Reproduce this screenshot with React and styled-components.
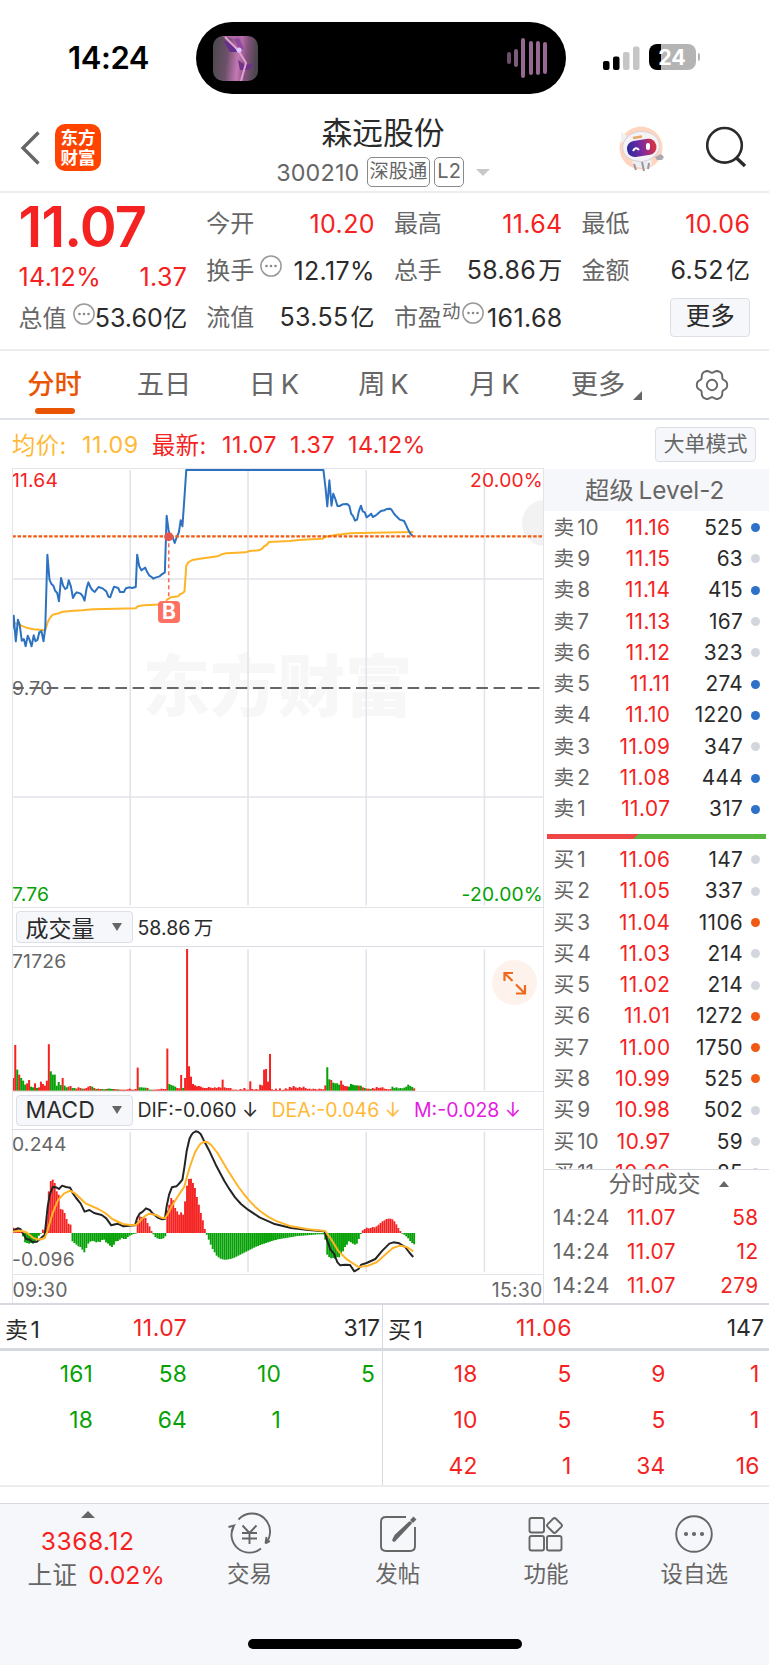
import React from 'react';
import styled, { createGlobalStyle } from 'styled-components';

const RED = '#f52222';
const GREEN = '#06a106';
const GREY = '#666666';
const DARK = '#2b2b2b';
const LINE = '#e2e4ea';

const GlobalStyle = createGlobalStyle`
  * {
    box-sizing: border-box;
  }
  body {
    margin: 0;
    background: #ffffff;
    color: ${DARK};
    font-family: Inter, "Noto Sans CJK SC", sans-serif;
  }
`;

const Page = styled.div`
  width: 769px;
  height: 1665px;
  overflow: hidden;
  display: flex;
  flex-direction: column;
`;

/* status bar */

const StatusBar = styled.div`
  height: 110px;
  padding: 22px 60px 0 68px;
  display: flex;
`;

const Clock = styled.div`
  width: 128px;
  flex: none;
  line-height: 71px;
  font-size: 31px;
  font-weight: 600;
  letter-spacing: -0.4px;
  color: #000000;
`;

const Island = styled.div`
  width: 369.5px;
  height: 72px;
  flex: none;
  padding: 0 18px 0 17px;
  border-radius: 36px;
  background: #000000;
  display: flex;
  align-items: center;
  justify-content: space-between;
`;

const Signal = styled.svg`
  flex: none;
  margin: 24px 0 0 37px;
`;

const Battery = styled.div`
  width: 47px;
  height: 26px;
  flex: none;
  margin: 22px 0 0 9px;
  border-radius: 8px;
  background: linear-gradient(90deg, #000000 25%, #b4b4b4 25%);
  color: #ffffff;
  font-size: 21.5px;
  font-weight: 700;
  line-height: 26px;
  text-align: center;
`;

const BatteryTip = styled.div`
  width: 2.5px;
  height: 8px;
  margin: 31px 0 0 2px;
  border-radius: 0 3px 3px 0;
  background: #b4b4b4;
`;

/* header */

const Header = styled.div`
  height: 83px;
  padding: 0 18px 0 20px;
  border-bottom: 2px solid #ededed;
  display: flex;
  align-items: flex-start;
`;

const BackIcon = styled.svg`
  flex: none;
  margin: 20px 14px 0 0;
`;

const Logo = styled.div`
  width: 46px;
  height: 47px;
  flex: none;
  margin-top: 14px;
  padding-top: 4px;
  border-radius: 10px;
  background: #ff4400;
  color: #ffffff;
  font-size: 17.5px;
  font-weight: 700;
  line-height: 19.5px;
  text-align: center;
`;

const TitleBlock = styled.div`
  width: 564px;
  flex: none;
  display: flex;
  flex-direction: column;
  align-items: center;
`;

const Title = styled.div`
  height: 45px;
  line-height: 45px;
  font-size: 30.8px;
`;

const SubTitle = styled.div`
  height: 34px;
  display: flex;
  align-items: center;
  color: ${GREY};
  font-size: 23.3px;
  letter-spacing: 0.2px;
`;

const Tag = styled.span`
  height: 30px;
  margin-left: ${props => props.gap}px;
  padding: 0 2px;
  border: 1.5px solid #8a8a8a;
  border-radius: 5px;
  font-size: ${props => props.size}px;
  letter-spacing: 0;
  line-height: 27px;
`;

const Triangle = styled.span`
  width: 0;
  height: 0;
  margin-left: ${props => props.gap || 0}px;
  border-left: ${props => props.size}px solid transparent;
  border-right: ${props => props.size}px solid transparent;
  border-${props => (props.up ? 'bottom' : 'top')}: ${props => props.tall}px solid ${props => props.color || GREY};
`;

const Robot = styled.svg`
  flex: none;
  margin: 16px 41px 0 -46px;
`;

const SearchIcon = styled.svg`
  flex: none;
  margin-top: 15px;
`;

/* quote summary */

const Summary = styled.div`
  height: 158px;
  padding: 0 18.5px;
  border-bottom: 2px solid #ededed;
  display: grid;
  grid-template-columns: repeat(4, 168.7px);
  column-gap: 19px;
`;

const SummaryColumn = styled.div`
  padding-top: 7px;
`;

const BigPrice = styled.div`
  height: 58px;
  line-height: 54px;
  font-size: 56px;
  font-weight: 600;
  letter-spacing: -0.8px;
  color: ${RED};
`;

const Stat = styled.div`
  height: ${props => props.height || 47}px;
  display: flex;
  align-items: center;
  justify-content: space-between;
  white-space: nowrap;
  font-size: 25px;
  letter-spacing: ${props => (props.tight ? 0 : 0.35)}px;
  line-height: 46px;
  color: ${props => props.color || DARK};
`;

const StatLabel = styled.span`
  display: flex;
  font-size: 24px;
  letter-spacing: 0;
  color: ${GREY};
`;

const Unit = styled.span`
  margin-left: ${props => (props.tight ? 0.5 : 2)}px;
  font-size: 24px;
`;

const Sup = styled.sup`
  position: relative;
  top: -7px;
  font-size: 18.5px;
  line-height: 46px;
`;

const InfoIcon = styled.svg`
  flex: none;
  margin: 7px 0 0 ${props => props.gap}px;
`;

const MoreButton = styled.div`
  width: 80px;
  height: 38.5px;
  margin: 4px 0 0 auto;
  border: 1.5px solid #dcdfe6;
  border-radius: 4px;
  background: #f6f7fa;
  font-size: 24.5px;
  line-height: 35px;
  text-align: center;
`;

/* period tabs */

const Tabs = styled.div`
  height: 69px;
  border-bottom: 2px solid #dfe1e8;
  display: flex;
`;

const Tab = styled.div`
  width: ${props => props.width}px;
  height: 67px;
  flex: none;
  display: flex;
  flex-direction: column;
  align-items: center;
  font-size: 27.3px;
  line-height: 68px;
  word-spacing: -3px;
  font-weight: ${props => (props.active ? 500 : 400)};
  color: ${props => (props.active ? '#ea5504' : GREY)};

  &::after {
    content: "";
    display: ${props => (props.active ? 'block' : 'none')};
    width: 40px;
    height: 6px;
    margin-top: -11px;
    border-radius: 3px;
    background: #ea5504;
    flex: none;
  }
`;

const Corner = styled.svg`
  flex: none;
  margin: 40px 53px 0 -12px;
`;

const GearIcon = styled.svg`
  flex: none;
  margin-top: 17px;
`;

/* average price line */

const PriceLine = styled.div`
  height: 48px;
  padding: 0 13px 0 12px;
  display: flex;
  align-items: center;
  font-size: 23.3px;
  letter-spacing: 0.5px;
  color: ${RED};
`;

const PriceItem = styled.span`
  width: ${props => props.width}px;
  color: ${props => props.color};
`;

const ModeButton = styled.div`
  width: 101px;
  height: 35px;
  margin-left: auto;
  border: 1.5px solid #dcdfe6;
  border-radius: 4px;
  background: #f6f7fa;
  color: ${GREY};
  font-size: 21px;
  letter-spacing: 0;
  line-height: 32px;
  text-align: center;
`;

/* charts */

const Main = styled.div`
  height: 837px;
  display: flex;
  border-bottom: 2px solid #d6d9df;
`;

const Charts = styled.div`
  width: 532px;
  margin-left: 11.5px;
  border: 1px solid ${LINE};
  border-width: 1.5px 1px 0;
`;

const ChartArea = styled.div`
  position: relative;
  height: ${props => props.height}px;
  overflow: hidden;
  border-bottom: 1.5px solid ${LINE};

  > svg {
    display: block;
  }
`;

const ChartLabel = styled.span`
  position: absolute;
  ${props => props.side || 'left'}: -0.5px;
  top: ${props => props.top}px;
  line-height: 20px;
  font-size: 19.3px;
  letter-spacing: 0.2px;
  color: ${props => props.color || GREY};
`;

const Watermark = styled.div`
  position: absolute;
  left: 130px;
  top: 178px;
  font-size: 67.5px;
  font-weight: 900;
  line-height: 80px;
  color: #f7f7f8;
`;

const SideKnob = styled.div`
  position: absolute;
  right: -24px;
  top: 31px;
  width: 45px;
  height: 46px;
  border-radius: 50%;
  background: #f2f2f2;
`;

const BuyMark = styled.div`
  position: absolute;
  left: 145.5px;
  top: 132px;
  width: 22px;
  height: 22px;
  border-radius: 4px;
  background: #fc7164;
  color: #ffffff;
  font-size: 21px;
  font-weight: 700;
  line-height: 22px;
  text-align: center;
`;

const ExpandButton = styled.div`
  position: absolute;
  right: 6px;
  top: 13px;
  width: 45px;
  height: 45px;
  border-radius: 50%;
  background: #fef2ec;
`;

const IndicatorBar = styled.div`
  height: 38.5px;
  padding-left: 3px;
  border-bottom: 1.5px solid #d9dce4;
  display: flex;
  align-items: center;
  white-space: nowrap;
  font-size: 19.5px;
  word-spacing: ${props => props.wordGap || 0}px;
`;

const IndicatorSelect = styled.div`
  width: 117px;
  height: 31.5px;
  margin-right: 5px;
  padding: 0 10px 0 9px;
  border: 1.5px solid #dcdfe6;
  border-radius: 4px;
  background: #f6f7fa;
  display: flex;
  align-items: center;
  justify-content: space-between;
  font-size: 23px;
`;

const Indicator = styled.span`
  width: ${props => props.width}px;
  color: ${props => props.color};
`;

const TimeAxis = styled.div`
  height: 29px;
  display: flex;
  justify-content: space-between;
  font-size: 19.5px;
  letter-spacing: 0.2px;
  line-height: 31px;
  color: ${GREY};
`;

/* level 2 panel */

const LevelPanel = styled.div`
  flex: 1;
  display: flex;
  flex-direction: column;
`;

const LevelTitle = styled.div`
  height: 42px;
  flex: none;
  margin-top: 1px;
  background: #f6f7fa;
  color: ${GREY};
  font-size: 24.3px;
  line-height: 43px;
  word-spacing: -2px;
  padding-right: 3px;
  text-align: center;
`;

const Book = styled.div`
  height: 658px;
  flex: none;
  padding-top: 1px;
  overflow: hidden;
`;

const BookRow = styled.div`
  height: 31.3px;
  padding: 0 9px 0 10px;
  display: flex;
  align-items: center;
  font-size: 20.8px;
  line-height: 24px;
`;

const BookSide = styled.span`
  width: 55px;
  color: ${GREY};
  word-spacing: -3px;
`;

const BookPrice = styled.span`
  width: 62px;
  text-align: right;
  letter-spacing: 0.5px;
  color: ${RED};
`;

const BookVolume = styled.span`
  flex: 1;
  text-align: right;
  letter-spacing: 0.3px;
`;

const Dot = styled.span`
  width: 9px;
  height: 9px;
  margin-left: 8px;
  border-radius: 50%;
  background: ${props => props.color};
`;

const RatioBar = styled.div`
  height: 5px;
  margin: 9px 3px 5.3px;
  background: linear-gradient(135deg, #ee4646 40.7%, #58b741 40.7%);
`;

const TradesTitle = styled.div`
  height: 31px;
  flex: none;
  border-top: 1.5px solid #d6d9df;
  padding: 0 0 2px 65px;
  display: flex;
  align-items: center;
  color: ${GREY};
  font-size: 23px;
  line-height: 28px;
`;

const TradeRow = styled.div`
  height: 34.3px;
  flex: none;
  padding: 0 10.5px 0 9.5px;
  display: flex;
  align-items: center;
  font-size: 20.8px;
  letter-spacing: 0.4px;
  color: ${RED};
`;

const TradeTime = styled.span`
  width: 74px;
  letter-spacing: 0.7px;
  color: ${GREY};
`;

const TradeVolume = styled.span`
  margin-left: auto;
`;

/* order queues */

const Queues = styled.div`
  height: 182px;
  display: grid;
  grid-template-columns: 382px 387px;
  border-bottom: 2px solid #ededed;
`;

const Queue = styled.div`
  height: 180px;
  border-left: ${props => (props.divided ? '1.5px solid #d6d9df' : 'none')};
`;

const QueueHead = styled.div`
  height: 46px;
  padding: 3px ${props => props.right}px 0 5px;
  border-bottom: 3px solid #d6dae0;
  display: flex;
  align-items: center;
  font-size: 23px;
`;

const QueueName = styled.span`
  width: 128px;
  word-spacing: -4px;
`;

const QueuePrice = styled.span`
  flex: 1;
  letter-spacing: 0.5px;
  color: ${RED};
`;

const QueueGrid = styled.div`
  width: 375px;
  margin-left: ${props => props.left}px;
  display: grid;
  grid-template-columns: repeat(4, 94px);
  color: ${props => props.color};
  font-size: 22.8px;
  letter-spacing: 0.2px;
  line-height: 45.8px;
  text-align: right;
`;

/* bottom bar */

const BottomBar = styled.div`
  height: 162px;
  margin-top: 16px;
  border-top: 1.5px solid #d6d9df;
  background: #f6f7fa;
  display: flex;
  flex-direction: column;
  align-items: center;
  justify-content: space-between;
  padding-bottom: 16px;
`;

const Nav = styled.div`
  width: 769px;
  display: flex;
`;

const IndexItem = styled.div`
  width: 175.3px;
  padding-top: 7px;
  display: flex;
  flex-direction: column;
  align-items: center;
  color: ${RED};
`;

const IndexValue = styled.div`
  margin-top: 6px;
  line-height: 34px;
  font-size: 24.6px;
  letter-spacing: 0.5px;
`;

const IndexChange = styled.div`
  padding-left: 17px;
  line-height: 35px;
  font-size: 24.8px;

  span {
    margin-right: 11px;
    color: ${GREY};
  }
`;

const NavItem = styled.div`
  width: 148.3px;
  padding-top: 8px;
  display: flex;
  flex-direction: column;
  align-items: center;
  font-size: 22.5px;
  line-height: 36px;
  color: ${GREY};
`;

const HomeIndicator = styled.div`
  width: 274px;
  height: 10px;
  border-radius: 5px;
  background: #000000;
`;

const sells = [
  ['10', '11.16', 525, 1], ['9', '11.15', 63, 0], ['8', '11.14', 415, 1], ['7', '11.13', 167, 0],
  ['6', '11.12', 323, 0], ['5', '11.11', 274, 1], ['4', '11.10', 1220, 1], ['3', '11.09', 347, 0],
  ['2', '11.08', 444, 1], ['1', '11.07', 317, 1],
];

const buys = [
  ['1', '11.06', 147, 0], ['2', '11.05', 337, 0], ['3', '11.04', 1106, 1], ['4', '11.03', 214, 0],
  ['5', '11.02', 214, 0], ['6', '11.01', 1272, 1], ['7', '11.00', 1750, 1], ['8', '10.99', 525, 1],
  ['9', '10.98', 502, 0], ['10', '10.97', 59, 0], ['11', '10.96', 85, 0],
];

const pricePoints = '35,510 39,468 45,545 51,480 56,495 62,543 68,538 73,560 79,528 84,540 90,560 96,527 101,545 107,540 112,518 118,514 124,545 129,505 135,285 141,360 146,372 152,378 157,393 163,400 168,425 174,355 180,378 186,388 191,385 196,362 202,380 208,415 214,403 219,398 230,402 236,410 241,423 247,385 252,368 258,383 264,392 270,397 275,390 281,382 292,386 298,391 303,395 309,411 314,413 320,395 325,381 337,385 342,397 353,397 359,386 370,383 376,385 387,382 391,285 397,320 403,332 408,328 414,324 420,338 426,348 432,352 437,357 443,354 455,350 460,345 470,338 475,168 481,215 487,235 492,232 498,250 504,232 510,218 515,182 520,200 526,110 531,31 922,31 928,85 933,140 939,62 945,138 950,102 956,118 962,139 968,139 977,134 990,133 996,139 1001,162 1007,170 1012,183 1018,180 1023,155 1029,138 1034,155 1040,158 1045,173 1052,168 1058,162 1063,172 1070,168 1076,163 1086,154 1096,152 1102,148 1113,147 1118,153 1124,163 1130,170 1140,180 1152,184 1158,197 1163,209 1170,222 1177,229';

const averagePoints = '37,488 56,496 75,504 95,509 129,512 135,490 141,477 150,465 168,461 175,457 200,454 235,452 265,449 300,448 387,446 393,440 410,437 470,434 476,420 487,413 508,410 514,403 520,401 526,395 531,318 537,308 548,301 570,297 620,290 632,284 645,281 700,278 712,274 738,272 746,268 754,259 760,256 767,247 825,244 860,240 920,237 928,231 960,225 1000,221 1060,219 1178,217';

const difPoints = '35,422 43,420 50,416 58,418 65,430 75,448 85,450 92,457 105,456 115,448 122,440 127,438 131,400 136,350 142,315 150,292 160,293 168,298 177,288 188,292 200,294 207,310 217,325 230,342 241,366 255,361 268,370 290,376 303,386 317,407 335,402 352,410 385,407 391,385 398,372 407,366 416,356 427,361 435,371 450,384 462,389 470,388 475,350 482,315 490,293 503,290 512,280 520,270 526,230 532,185 540,148 545,137 550,130 558,125 565,127 572,133 580,150 595,180 615,225 640,275 655,300 670,323 687,343 707,360 740,383 780,402 830,415 880,421 925,425 932,450 942,480 952,492 962,518 970,527 985,525 998,526 1010,545 1022,538 1030,525 1045,520 1070,508 1090,483 1110,462 1122,458 1138,461 1155,472 1168,490 1178,502';

const deaPoints = '35,426 58,423 75,428 95,445 110,450 127,446 135,425 150,370 165,332 182,312 200,303 215,312 245,342 280,358 300,370 320,388 350,403 375,407 388,405 400,393 412,380 425,372 445,376 460,384 470,386 480,370 492,345 510,315 525,292 540,235 555,190 563,175 572,162 583,156 592,158 602,166 620,190 650,243 680,292 695,313 710,332 727,351 745,367 767,383 790,395 830,410 880,419 927,424 945,450 965,485 990,510 1022,532 1050,528 1075,517 1100,493 1120,475 1140,468 1160,472 1178,485';

// one bar per minute, negative values are drawn green
const volumes = [
  38, 137, -63, 48, -38, -30, -18, 22, 32, -12, -10, 22, -8, 10, 27, 20, 15, 30, 139, -58,
  -48, -48, -15, -26, -17, 38, -15, -10, 12, 14, -8, -8, 6, 10, 8, -6, 6, 8, 12, 14,
  -12, 8, -5, 6, 5, -5, -4, 5, -6, -6, -5, 5, 4, -4, 3, 3, 3, 3, 4, 6,
  3, 3, 5, 69, -10, -10, -9, -9, 8, -3, -3, 3, 3, 4, 4, 6, 5, 5, 126, -20,
  -17, -15, -12, 8, 7, 47, -8, 38, 424, 73, 42, 20, 16, 13, 14, 12, 9, 8, 8, 11,
  9, 8, 10, 8, 11, 9, 33, 10, 8, 8, 8, 3, 3, 3, 2, 5, 3, 8, 3, 3,
  28, 5, 3, 5, 3, 18, 16, 63, 65, 27, 110, 4, 2, 6, 2, 7, 2, 3, 7, 4,
  11, 9, 14, 10, 8, 11, 8, 12, 8, 5, 6, 4, 6, 5, 3, 6, 5, 4, 16, -70,
  -34, 32, -24, -22, -22, -18, 30, 18, 14, 13, -12, -20, -18, -16, -16, 15, -15, 10, -8, 6,
  6, -5, 8, 6, 11, 8, 9, 10, 6, 5, 4, 5, -12, -8, -10, -7, -8, -7, -9, -12,
  -18, -14, -11, 7,
];

const macd = [
  16, 14, 12, 10, 3, -10, -28, -30, -32, -30, -32, -24, -20, -8, -2, 10, 5, 50, 125, 156,
  160, 150, 125, 115, 72, 70, 60, 42, 28, 25, -25, -30, -35, -40, -42, -50, -58, -45, -32, -26,
  -24, -25, -28, -26, -27, -21, -20, -28, -32, -38, -42, -35, -25, -24, -20, -15, -18, -18, -12, -8,
  -5, -3, -2, 35, 50, 48, 48, 45, 30, 20, 6, -4, -12, -16, -18, -18, -16, -10, 68, 85,
  105, 98, 75, 65, 55, 62, 55, 95, 142, 162, 163, 150, 135, 108, 85, 60, 38, 12, -5, -20,
  -35, -48, -58, -68, -73, -77, -79, -80, -80, -79, -78, -76, -74, -71, -68, -65, -62, -59, -56, -53,
  -50, -47, -44, -41, -39, -36, -34, -32, -30, -28, -26, -24, -22, -21, -19, -18, -17, -16, -15, -14,
  -13, -12, -11, -10, -9, -9, -8, -8, -7, -7, -6, -6, -5, -5, -4, -4, -4, -4, -20, -65,
  -72, -76, -75, -78, -72, -73, -62, -55, -42, -35, -25, -28, -32, -35, -32, -18, -3, 8, 12, 16,
  14, 15, 18, 17, 20, 25, 30, 35, 38, 42, 43, 43, 41, 35, 26, 15, 6, -2, -5, -10,
  -16, -24, -30, -34,
];

const Bars = ({ values, base, width, signed }) => values.map((value, i) => (
  <rect
    key={i}
    x={35 + i * 5.63}
    y={signed && value < 0 ? base : base - Math.abs(value)}
    width={width}
    height={Math.abs(value)}
    fill={value > 0 ? RED : GREEN}
  />
));

const Grid = ({ top, bottom }) => [371, 707, 1044, 1381].map(x => (
  <line key={x} x1={x} x2={x} y1={top} y2={bottom} stroke={LINE} strokeWidth="4.5" />
));

const Curve = ({ points, color }) => (
  <polyline points={points} fill="none" stroke={color} strokeWidth="2" strokeLinejoin="round" vectorEffect="non-scaling-stroke" />
);

// six-lobed cog outline
const gearPoints = Array.from({ length: 72 }, (_, i) => {
  const angle = (i * Math.PI) / 36;
  const r = 14 + 1.5 * Math.cos(6 * angle) - 0.3 * Math.cos(12 * angle);
  return `${(17 + r * Math.cos(angle)).toFixed(2)},${(17 + r * Math.sin(angle)).toFixed(2)}`;
}).join(' ');

const Info = ({ gap = 0 }) => (
  <InfoIcon gap={gap} width="22" height="22" viewBox="0 0 22 22">
    <circle cx="11" cy="11" r="10.1" fill="none" stroke="#999" strokeWidth="1.5" />
    <circle cx="6.5" cy="11" r="1.3" fill="#888" />
    <circle cx="11" cy="11" r="1.3" fill="#888" />
    <circle cx="15.5" cy="11" r="1.3" fill="#888" />
  </InfoIcon>
);

const BookRows = ({ name, rows, color }) => rows.map(([level, price, volume, changed]) => (
  <BookRow key={level}>
    <BookSide>{name} {level}</BookSide>
    <BookPrice>{price}</BookPrice>
    <BookVolume>{volume}</BookVolume>
    <Dot color={changed ? color : '#d3d6dc'} />
  </BookRow>
));

const Select = ({ children }) => (
  <IndicatorSelect>
    {children}
    <Triangle size={5} tall={8.5} />
  </IndicatorSelect>
);

const App = () => {
  return (
    <>
      <GlobalStyle />
      <Page>
        <StatusBar>
          <Clock>14:24</Clock>
          <Island>
            <svg width="45" height="45" viewBox="0 0 45 45">
              <defs>
                <linearGradient id="cover" x1="0" x2="1" y1="0" y2="0.1">
                  <stop offset="0" stopColor="#48494d" />
                  <stop offset="0.35" stopColor="#6d5068" />
                  <stop offset="0.6" stopColor="#c579b5" />
                  <stop offset="0.78" stopColor="#85527e" />
                  <stop offset="1" stopColor="#4d464f" />
                </linearGradient>
                <clipPath id="coverClip"><rect width="45" height="45" rx="10" /></clipPath>
              </defs>
              <g clipPath="url(#coverClip)">
                <rect width="45" height="45" fill="url(#cover)" />
                <path d="M8 0L21 3L31 15L28 0Z" fill="#b065a7" />
                <path d="M10 4L18 8L25 16L17 16Z" fill="#65308c" />
                <path d="M21 3L26 14L31 13L26 2Z" fill="#9149a0" />
                <path d="M25 24L32 29L41 27L37 34L27 34Z" fill="#6d3587" />
                <path d="M12 1L25 14L33 27L28 45" fill="none" stroke="#e3a0d4" strokeWidth="2" />
                <circle cx="26" cy="14" r="2.5" fill="#dbcaff" />
              </g>
            </svg>
            <svg width="41" height="42" viewBox="0 0 41 42" stroke="#986792" strokeWidth="4" strokeLinecap="round">
              <path d="M2 17V25" stroke="#6c4e69" />
              <path d="M9 14V28" stroke="#805b7b" />
              <path d="M16 3V39M24 6V36M31 6V36M38 7V35" />
            </svg>
          </Island>
          <Signal width="37" height="24" viewBox="0 0 37 24">
            <rect x="0" y="15" width="6.5" height="9" rx="2" />
            <rect x="10" y="10.5" width="6.5" height="13.5" rx="2" />
            <rect x="20" y="6" width="6.5" height="18" rx="2" fill="#c6c6c6" />
            <rect x="30" y="0.5" width="6.5" height="23.5" rx="2" fill="#c6c6c6" />
          </Signal>
          <Battery>24</Battery>
          <BatteryTip />
        </StatusBar>

        <Header>
          <BackIcon width="21" height="36" viewBox="0 0 21 36">
            <path d="M18.5 2.5L3 18L18.5 33.5" fill="none" stroke="#666" strokeWidth="3.4" />
          </BackIcon>
          <Logo>东方<br />财富</Logo>
          <TitleBlock>
            <Title>森远股份</Title>
            <SubTitle>
              300210
              <Tag gap={7} size={19.3}>深股通</Tag>
              <Tag gap={4} size={20}>L2</Tag>
              <Triangle size={7} tall={7} gap={12} color="#c8c8c8" />
            </SubTitle>
          </TitleBlock>
          <Robot width="46" height="46" viewBox="0 0 46 46">
            <defs>
              <linearGradient id="visor">
                <stop offset="0" stopColor="#2a2b9e" />
                <stop offset="0.5" stopColor="#7b2a9e" />
                <stop offset="1" stopColor="#e0343c" />
              </linearGradient>
            </defs>
            <circle cx="22" cy="22" r="21.5" fill="#ffd5bf" />
            <path d="M13 32L32 31L33 38L28 43L14 40Z" fill="#eeeef1" />
            <path d="M15 38L17 44M23 36L25 45M30 37L29 43" stroke="#98969f" strokeWidth="2" />
            <path d="M2 17L2 6Q7 8 10 13Z" fill="#f1f1f3" />
            <ellipse cx="22" cy="20.5" rx="18.5" ry="15" transform="rotate(-7 22 20)" fill="#f4f3f5" stroke="#d5d3d9" />
            <rect x="8" y="14" width="29.5" height="16" rx="7.5" transform="rotate(-9 22 22)" fill="url(#visor)" />
            <path d="M14 25q2.5 -5 6 -1" fill="none" stroke="#fff" strokeWidth="2" />
            <rect x="27" y="17" width="4" height="7" rx="2" fill="#fff" />
            <path d="M14 12L23 10.5" stroke="#e9a568" strokeWidth="2.5" />
            <path d="M36 31L42 28L45 31L43 34L38 34Z" fill="#aaa9b0" />
          </Robot>
          <SearchIcon width="43" height="44" viewBox="0 0 43 44" fill="none" stroke="#2b2b2b" strokeWidth="2.6">
            <circle cx="18.5" cy="20.3" r="17.3" />
            <path d="M30.5 33L39 41" strokeWidth="3.4" />
          </SearchIcon>
        </Header>

        <Summary>
          <SummaryColumn>
            <BigPrice>11.07</BigPrice>
            <Stat color={RED} height={37}><span>14.12%</span><span>1.37</span></Stat>
            <Stat tight><StatLabel>总值<Info gap={6} /></StatLabel><span>53.60<Unit tight>亿</Unit></span></Stat>
          </SummaryColumn>
          <SummaryColumn>
            <Stat color={RED}><StatLabel>今开</StatLabel><span>10.20</span></Stat>
            <Stat><StatLabel>换手<Info gap={6} /></StatLabel><span>12.17%</span></Stat>
            <Stat><StatLabel>流值</StatLabel><span>53.55<Unit>亿</Unit></span></Stat>
          </SummaryColumn>
          <SummaryColumn>
            <Stat color={RED}><StatLabel>最高</StatLabel><span>11.64</span></Stat>
            <Stat><StatLabel>总手</StatLabel><span>58.86<Unit>万</Unit></span></Stat>
            <Stat><StatLabel>市盈<Sup>动</Sup><Info gap={2} /></StatLabel><span>161.68</span></Stat>
          </SummaryColumn>
          <SummaryColumn>
            <Stat color={RED}><StatLabel>最低</StatLabel><span>10.06</span></Stat>
            <Stat><StatLabel>金额</StatLabel><span>6.52<Unit>亿</Unit></span></Stat>
            <MoreButton>更多</MoreButton>
          </SummaryColumn>
        </Summary>

        <Tabs>
          <Tab width={109} active>分时</Tab>
          <Tab width={110}>五日</Tab>
          <Tab width={110}>日 K</Tab>
          <Tab width={109}>周 K</Tab>
          <Tab width={113}>月 K</Tab>
          <Tab width={94}>更多</Tab>
          <Corner width="9" height="9" viewBox="0 0 9 9"><path d="M9 0V9H0Z" fill="#666" /></Corner>
          <GearIcon width="34" height="34" viewBox="0 0 34 34" fill="none" stroke="#666" strokeWidth="1.9">
            <polygon points={gearPoints} strokeLinejoin="round" />
            <circle cx="17" cy="17" r="5.2" />
          </GearIcon>
        </Tabs>

        <PriceLine>
          <PriceItem width={70} color="#ffb937">均价:</PriceItem>
          <PriceItem width={70} color="#ffb937">11.09</PriceItem>
          <PriceItem width={70}>最新:</PriceItem>
          <PriceItem width={68}>11.07</PriceItem>
          <PriceItem width={58}>1.37</PriceItem>
          <span>14.12%</span>
          <ModeButton>大单模式</ModeButton>
        </PriceLine>

        <Main>
          <Charts>
            <ChartArea height={439}>
              <Watermark>东方财富</Watermark>
              <SideKnob />
              <svg width="530" height="438" viewBox="37 28 1511 1314" preserveAspectRatio="none" style={{ position: 'relative' }}>
                <Grid top={31} bottom={1337} />
                <path d="M35 358H1549M35 1012H1549" stroke={LINE} strokeWidth="4" />
                <path d="M35 685H1549" stroke="#666" strokeWidth="6" strokeDasharray="33 16" />
                <Curve points={averagePoints} color="#ffb427" />
                <Curve points={pricePoints} color="#2d72c0" />
                <path d="M35 230H1549" stroke="#f05a14" strokeWidth="7" strokeDasharray="10 5" />
                <path d="M481 230V418" stroke="#f96b5b" strokeWidth="4.5" strokeDasharray="12 9" />
                <ellipse cx="481" cy="231" rx="13" ry="13.5" fill="#e4554f" />
              </svg>
              <BuyMark>B</BuyMark>
              <ChartLabel top={1} color={RED}>11.64</ChartLabel>
              <ChartLabel top={1} color={RED} side="right">20.00%</ChartLabel>
              <ChartLabel top={208.5}>9.70</ChartLabel>
              <ChartLabel top={415} color={GREEN}>7.76</ChartLabel>
              <ChartLabel top={415} color={GREEN} side="right">-20.00%</ChartLabel>
            </ChartArea>
            <IndicatorBar wordGap={-2}>
              <Select>成交量</Select>
              <Indicator>58.86 万</Indicator>
            </IndicatorBar>
            <ChartArea height={145}>
              <svg width="530" height="144" viewBox="37 170 1511 431" preserveAspectRatio="none">
                <Grid top={177} bottom={599} />
                <Bars values={volumes} base={600} width={5.7} />
              </svg>
              <ChartLabel top={4}>71726</ChartLabel>
              <ExpandButton>
                <svg width="45" height="45" viewBox="0 0 45 45" fill="none" stroke="#ee6a1f" strokeWidth="2.2">
                  <path d="M12.5 21V13H21M13 13.5L20.5 21M33 25V33.5H24M24 24.5L32.5 33" />
                </svg>
              </ExpandButton>
            </ChartArea>
            <IndicatorBar>
              <Select>MACD</Select>
              <Indicator width={134}>DIF:-0.060 ↓</Indicator>
              <Indicator width={142.5} color="#ffb937">DEA:-0.046 ↓</Indicator>
              <Indicator color="#e31be3">M:-0.028 ↓</Indicator>
            </IndicatorBar>
            <ChartArea height={144.5}>
              <svg width="530" height="143" viewBox="37 121 1511 429" preserveAspectRatio="none">
                <Grid top={126} bottom={548} />
                <Bars values={macd} base={430} width={5.4} signed />
                <Curve points={difPoints} color="#242424" />
                <Curve points={deaPoints} color="#ffb427" />
              </svg>
              <ChartLabel top={3.5}>0.244</ChartLabel>
              <ChartLabel top={119}>-0.096</ChartLabel>
            </ChartArea>
            <TimeAxis><span>09:30</span><span>15:30</span></TimeAxis>
          </Charts>

          <LevelPanel>
            <LevelTitle>超级 Level-2</LevelTitle>
            <Book>
              <BookRows name="卖" rows={sells} color="#2d72c8" />
              <RatioBar />
              <BookRows name="买" rows={buys} color="#f05a14" />
            </Book>
            <TradesTitle>
              分时成交
              <Triangle up size={5.5} tall={6} gap={18} />
            </TradesTitle>
            {[58, 12, 279].map(volume => (
              <TradeRow key={volume}>
                <TradeTime>14:24</TradeTime>
                <span>11.07</span>
                <TradeVolume>{volume}</TradeVolume>
              </TradeRow>
            ))}
          </LevelPanel>
        </Main>

        <Queues>
          <Queue>
            <QueueHead right={2}>
              <QueueName>卖 1</QueueName>
              <QueuePrice>11.07</QueuePrice>
              <span>317</span>
            </QueueHead>
            <QueueGrid left={-1} color={GREEN}>
              {[161, 58, 10, 5, 18, 64, 1].map((count, i) => <span key={i}>{count}</span>)}
            </QueueGrid>
          </Queue>
          <Queue divided>
            <QueueHead right={5}>
              <QueueName>买 1</QueueName>
              <QueuePrice>11.06</QueuePrice>
              <span>147</span>
            </QueueHead>
            <QueueGrid left={0.5} color={RED}>
              {[18, 5, 9, 1, 10, 5, 5, 1, 42, 1, 34, 16].map((count, i) => <span key={i}>{count}</span>)}
            </QueueGrid>
          </Queue>
        </Queues>

        <BottomBar>
          <Nav>
            <IndexItem>
              <Triangle up size={7} tall={7} />
              <IndexValue>3368.12</IndexValue>
              <IndexChange><span>上证</span>0.02%</IndexChange>
            </IndexItem>
            <NavItem>
              <svg width="44" height="44" viewBox="0 0 44 44" fill="none" stroke="#666" strokeWidth="1.9">
                <path d="M11.5 7.5A18 18 0 0 1 38.5 31.5L43 29M38.5 31.5L39.5 25" />
                <path d="M34 36.5A18 18 0 0 1 7 13.5L1.5 15M7 13.5L4.5 21" />
                <path d="M15.5 13.5L22.5 21L29.5 13.5M22.5 21V32M15 21H30M15 26.5H30" />
              </svg>
              交易
            </NavItem>
            <NavItem>
              <svg width="44" height="44" viewBox="0 0 44 44" fill="none" stroke="#666" strokeWidth="1.9">
                <path d="M30 5H10Q5 5 5 10V34Q5 39 10 39H34Q39 39 39 34V15" />
                <path d="M34 11L18 28L20 24Z" strokeWidth="3.5" strokeLinejoin="round" />
                <path d="M35.5 9.5L39 6" strokeWidth="4" />
              </svg>
              发帖
            </NavItem>
            <NavItem>
              <svg width="44" height="44" viewBox="0 0 44 44" fill="none" stroke="#666" strokeWidth="1.9">
                <rect x="5.5" y="6" width="14.5" height="14.5" rx="2" />
                <rect x="5.5" y="24" width="14.5" height="14.5" rx="2" />
                <rect x="23" y="24" width="14.5" height="14.5" rx="2" />
                <rect x="24.7" y="7.7" width="11.6" height="11.6" rx="2" transform="rotate(45 30.5 13.5)" />
              </svg>
              功能
            </NavItem>
            <NavItem>
              <svg width="44" height="44" viewBox="0 0 44 44" fill="none" stroke="#666" strokeWidth="1.9">
                <circle cx="22" cy="22" r="17.8" />
                <g fill="#666" stroke="none">
                  <circle cx="14" cy="22" r="2.1" />
                  <circle cx="22" cy="22" r="2.1" />
                  <circle cx="30" cy="22" r="2.1" />
                </g>
              </svg>
              设自选
            </NavItem>
          </Nav>
          <HomeIndicator />
        </BottomBar>
      </Page>
    </>
  );
};

export default App;
